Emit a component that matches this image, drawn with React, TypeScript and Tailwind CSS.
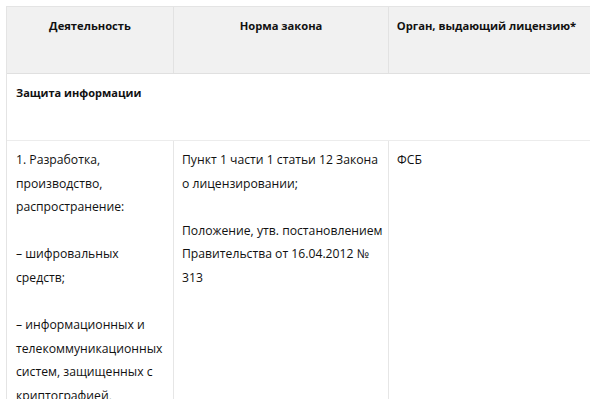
import React from "react";

const font = { fontFamily: '"Open Sans", "Noto Sans", sans-serif' };

function Lines({ lines }: { lines: string[] }) {
  return (
    <div>
      {lines.map((l, i) => (
        <div key={i} className="whitespace-nowrap h-[23.6px] leading-[23.6px]">
          {l}
        </div>
      ))}
    </div>
  );
}

export default function App() {
  return (
    <div className="w-[590px] h-[399px] bg-white overflow-hidden text-[12.2px] text-[#111]" style={font}>
      <div className="ml-[6px] mt-[6px] w-[584px] border border-[#e4e4e4] border-r-0">
        {/* header */}
        <div className="grid grid-cols-[167px_215px_1fr] h-[67px] bg-[#f1f1f1] border-b border-[#e0e0e0] font-bold text-[11.2px]">
          <div className="border-r border-[#e2e2e2] text-center pt-[7px] leading-[23.6px] whitespace-nowrap">Деятельность</div>
          <div className="border-r border-[#e2e2e2] text-center pt-[7px] leading-[23.6px] whitespace-nowrap">Норма закона</div>
          <div className="text-center pt-[7px] leading-[23.6px] pr-[6px] whitespace-nowrap">Орган, выдающий лицензию*</div>
        </div>
        {/* section */}
        <div className="h-[67px] border-b border-[#ececec] px-[9px] pt-[7px] font-bold text-[11px] leading-[23.6px]">
          Защита информации
        </div>
        {/* body */}
        <div className="grid grid-cols-[167px_215px_1fr] h-[300px]">
          <div className="border-r border-[#e6e6e6] pl-[9px] pt-[7px]">
            <Lines lines={["1. Разработка,", "производство,", "распространение:", ""]} />
            <Lines lines={["– шифровальных", "средств;", ""]} />
            <Lines lines={["– информационных и", "телекоммуникационных", "систем, защищенных с", "криптографией,"]} />
          </div>
          <div className="border-r border-[#e6e6e6] pl-[8px] pt-[7px]">
            <Lines lines={["Пункт 1 части 1 статьи 12 Закона", "о лицензировании;", ""]} />
            <Lines lines={["Положение, утв. постановлением", "Правительства от 16.04.2012 №", "313"]} />
          </div>
          <div className="pl-[8px] pt-[7px]">
            <Lines lines={["ФСБ"]} />
          </div>
        </div>
      </div>
    </div>
  );
}
